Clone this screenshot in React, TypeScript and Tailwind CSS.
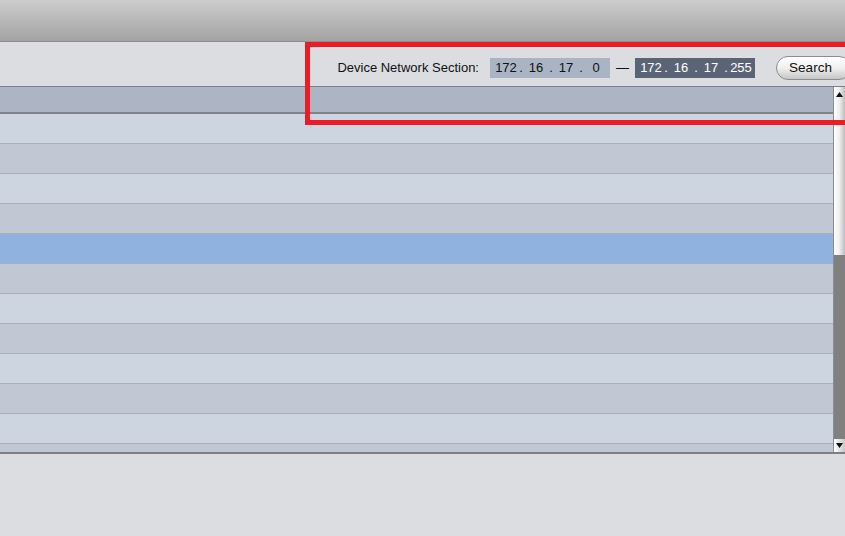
import React from 'react';

const ROWS = 12;
const SELECTED = 4;

function IpBox({ parts, dark }: { parts: string[]; dark?: boolean }) {
    return (
        <div className={`flex items-center h-[20px] w-[120px] pl-[5px] text-[13px] ${dark ? 'bg-[#5b6476] text-white' : 'bg-[#aab4c4] text-[#111]'}`}>
            {parts.map((p, i) => (
                <React.Fragment key={i}>
                    {i > 0 && <span className="w-[8px] text-center">.</span>}
                    <span className="w-[22px] text-center">{p}</span>
                </React.Fragment>
            ))}
        </div>
    );
}

function ScrollBar() {
    return (
        <div className="w-[12px] flex flex-col border-l border-[#8a8d94] bg-gradient-to-r from-[#ffffff] via-[#eeeeee] to-[#bdbdbd]">
            <div className="h-[14px] flex items-center justify-center">
                <svg width="7" height="5" viewBox="0 0 7 5"><path d="M3.5 0L7 5H0z" fill="#111" /></svg>
            </div>
            <div className="flex-1 flex flex-col">
                <div className="h-[154px]" />
                <div className="flex-1 bg-[#808080]" />
            </div>
            <div className="h-[13px] flex items-center justify-center rounded-b-[4px] bg-gradient-to-r from-[#ffffff] to-[#c8c8c8]">
                <svg width="7" height="5" viewBox="0 0 7 5"><path d="M0 0H7L3.5 5z" fill="#111" /></svg>
            </div>
        </div>
    );
}

export default function App() {
    return (
        <div className="relative w-[845px] h-[536px] overflow-hidden bg-[#dcdde1] font-['Liberation_Sans',Arial,sans-serif]">
            {/* title strip */}
            <div className="h-[42px] bg-gradient-to-b from-[#cdcdcd] to-[#a3a3a3] border-b border-[#8e8e8e]" />

            {/* search toolbar */}
            <div className="h-[44px] pt-[8px] flex items-center justify-end">
                <span className="text-[13px] text-[#111] mr-[11px]">Device Network Section:</span>
                <IpBox parts={['172', '16', '17', '0']} />
                <span className="w-[25px] text-center text-[13px] text-[#111]">—</span>
                <IpBox parts={['172', '16', '17', '255']} dark />
                <button className="ml-[21px] mr-[-6px] h-[24px] w-[75px] rounded-full border border-[#8d8d8d] bg-gradient-to-b from-[#ffffff] via-[#f0f0f0] to-[#c6c6c6] text-[13.5px] text-[#111] pr-[6px]">
                    Search
                </button>
            </div>

            {/* device list */}
            <div className="flex h-[368px] border-t border-b-2 border-[#7e8088]">
                <div className="flex-1 flex flex-col overflow-hidden">
                    <div className="h-[27px] shrink-0 bg-[#adb5c5] border-b-2 border-[#80838b]" />
                    {Array.from({ length: ROWS }).map((_, i) => (
                        <div
                            key={i}
                            className={`h-[30px] shrink-0 border-b border-[#a9b0bb] ${
                                i === SELECTED ? 'bg-[#8fb3de]' : i % 2 === 0 ? 'bg-[#cdd5e1]' : 'bg-[#c1c8d4]'
                            }`}
                        />
                    ))}
                </div>
                <ScrollBar />
            </div>

            {/* highlight frame */}
            <div className="absolute left-[305px] top-[42px] w-[560px] h-[83px] border-[5px] border-[#ed1c24]" />
        </div>
    );
}
